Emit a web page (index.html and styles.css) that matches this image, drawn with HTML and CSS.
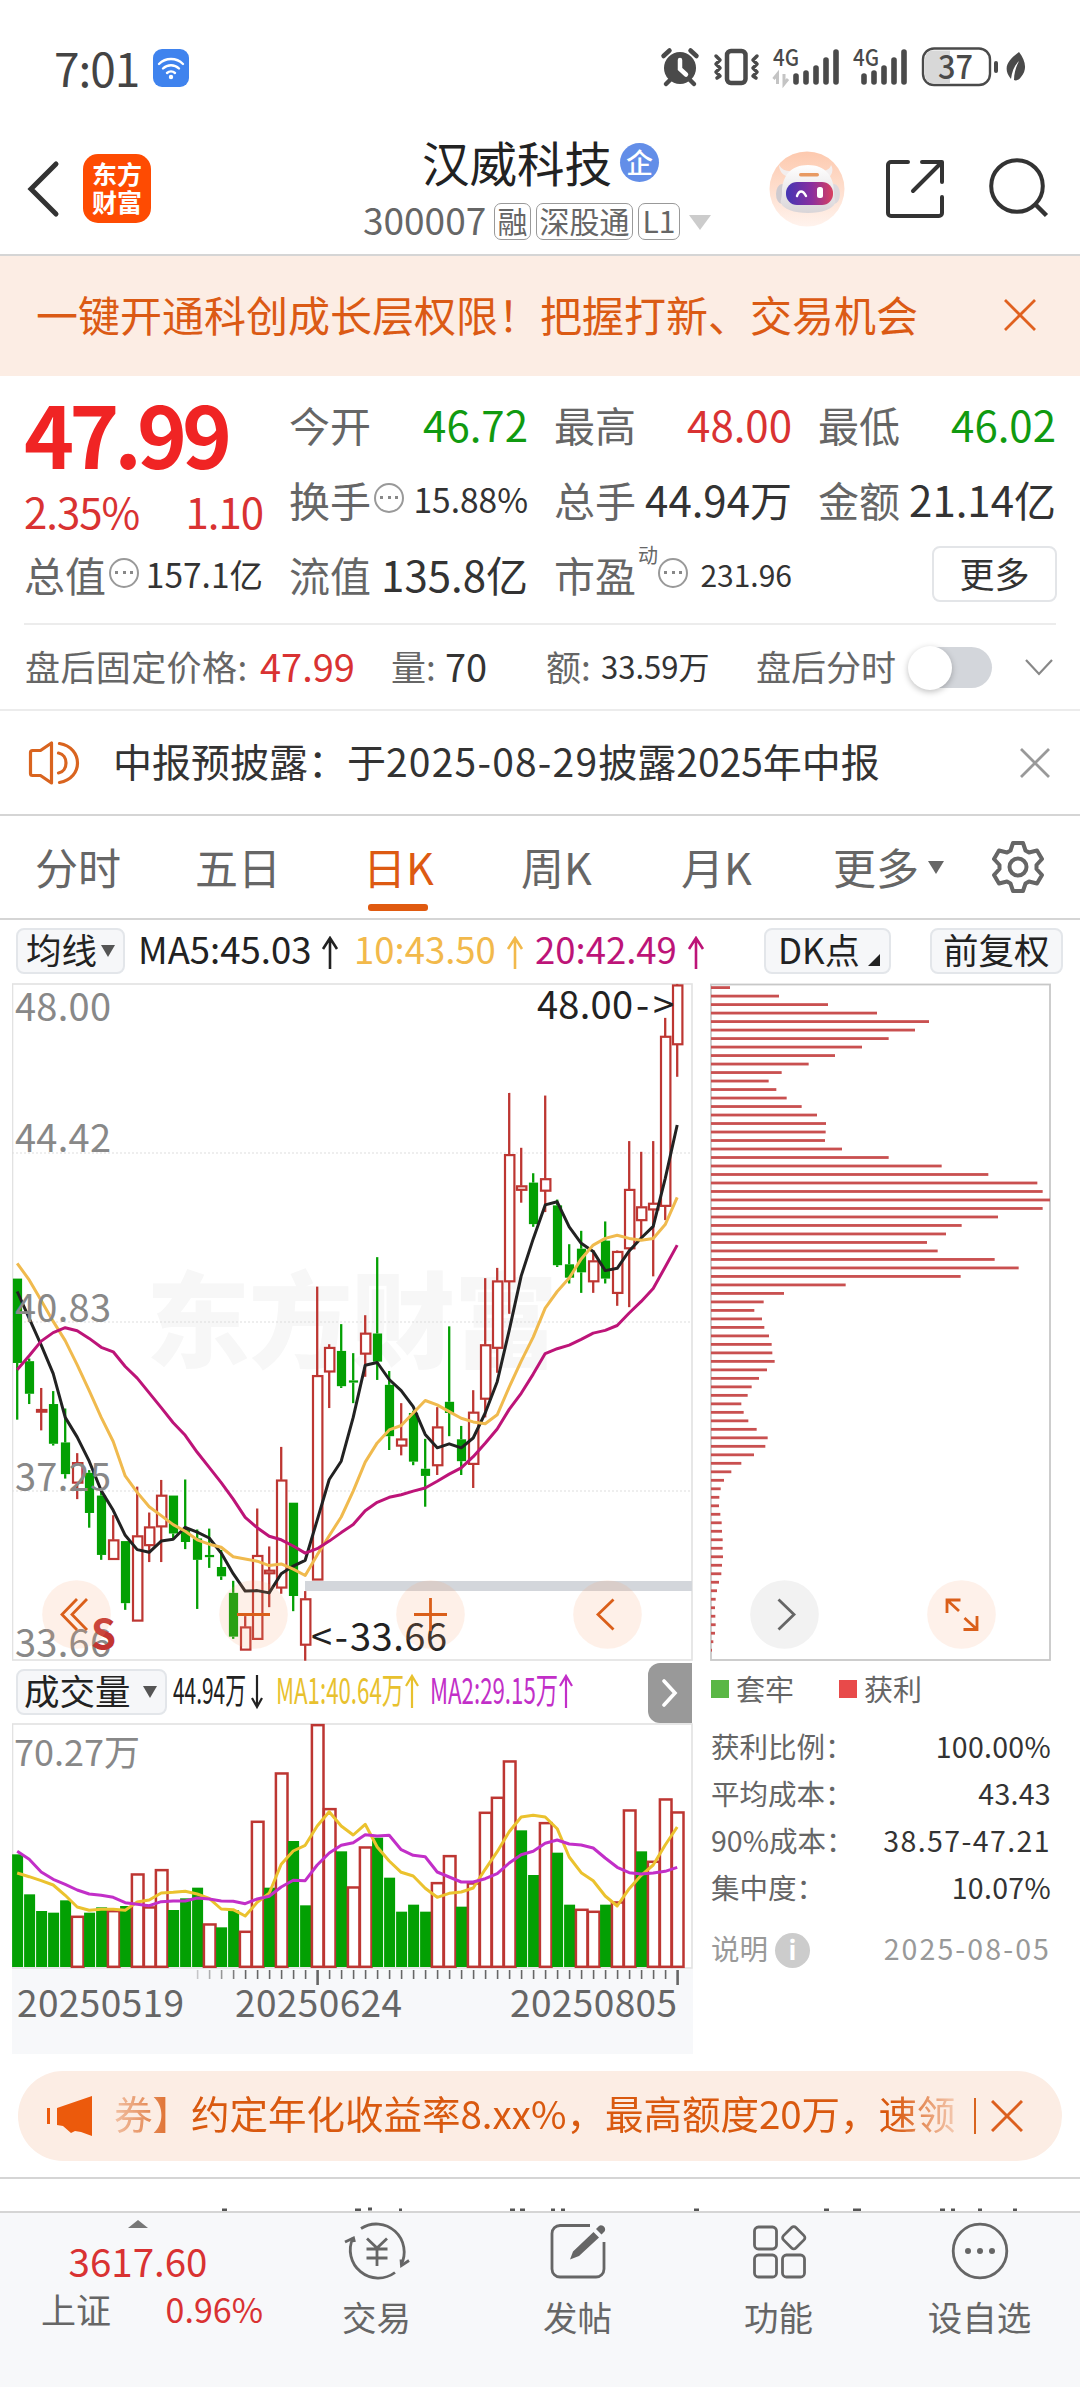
FILE: index.html
```html
<!DOCTYPE html>
<html lang="zh-CN">
<head>
<meta charset="utf-8">
<title>汉威科技 300007</title>
<link rel="stylesheet" href="styles.css">
</head>
<body>
<div class="app">
  <div class="status">
    <div class="status-left">
      <span class="clock">7:01</span>
      <svg class="wifi" viewBox="0 0 36 38"><rect width="36" height="38" rx="9" fill="#3f83ee"/><g fill="none" stroke="#fff" stroke-width="2.4" stroke-linecap="round"><path d="M6 15a17 17 0 0 1 24 0"/><path d="M10 19.500a11.500 11.500 0 0 1 16 0"/><path d="M14 24a6 6 0 0 1 8 0"/></g><circle cx="18" cy="28" r="2.200" fill="#fff"/></svg>
    </div>
    <svg class="status-icons" viewBox="658 44 370 46">
      <g fill="#4a4a4a" stroke="none">
        <circle cx="680" cy="68" r="16"/>
        <g fill="none" stroke="#4a4a4a" stroke-width="4.500" stroke-linecap="round"><path d="M663.500 56l6-5.500M696.500 56l-6-5.500M670 80l-4 4M690 80l4 4"/></g>
        <path d="M680 60v9l6 5.500" fill="none" stroke="#fff" stroke-width="4.500" stroke-linecap="round"/>
        <rect x="727" y="51" width="18.500" height="32" rx="4" fill="none" stroke="#4a4a4a" stroke-width="4.500"/>
        <path d="M716 56l4 4-4 4 4 4-4 4 4 4-3 2M757 56l-4 4 4 4-4 4 4 4-4 4 3 2" fill="none" stroke="#4a4a4a" stroke-width="3.500" stroke-linecap="round" stroke-linejoin="round"/>
        <path d="M796 76v6M806 73v9M816 68v14M826 60v22M836 52v30M864 76v6M874 73v9M884 68v14M894 60v22M904 52v30" fill="none" stroke="#4a4a4a" stroke-width="5.600" stroke-linecap="round"/>
        <path d="M777.500 84v-10l-4 5M784 74v10l4-5" fill="none" stroke="#c4c4c4" stroke-width="3"/>
      </g>
      <rect x="923" y="48.500" width="67" height="36.500" rx="11" fill="#fff" stroke="#4a4a4a" stroke-width="2.400"/>
      <path d="M950 50.500h-17a8 8 0 0 0-8 8v17a8 8 0 0 0 8 8h17z" fill="#d8d8d8"/>
      <rect x="994" y="61" width="4" height="12" rx="2" fill="#4a4a4a"/>
      <path d="M1019 52c6 8 9 17 2 25-2 3-5 4-7 3 0-7 2-13 5-19-5 5-7 11-8 18-9-11-3-19 8-27z" fill="#4a4a4a"/>
      <text class="net" x="773" y="66" textLength="26" lengthAdjust="spacingAndGlyphs">4G</text>
      <text class="net" x="853" y="66" textLength="26" lengthAdjust="spacingAndGlyphs">4G</text>
      <text class="batt" x="938" y="78.500" textLength="35" lengthAdjust="spacingAndGlyphs">37</text>
    </svg>
  </div>

  <header class="header">
    <svg class="back" viewBox="0 0 34 58"><path d="M30 4L5 29l25 25" fill="none" stroke="#333" stroke-width="5" stroke-linecap="round"/></svg>
    <div class="logo"><span>东方</span><span>财富</span></div>
    <div class="title">
      <div class="name">汉威科技<span class="ent">企</span></div>
      <div class="code"><span class="num">300007</span><span class="tag">融</span><span class="tag wide">深股通</span><span class="tag l1">L1</span><i class="tri"></i></div>
    </div>
    <svg class="robot" viewBox="0 0 76 76">
      <defs>
        <linearGradient id="rb" x2="0" y2="1"><stop stop-color="#fdc9ae"/><stop offset="1" stop-color="#fff3ed"/></linearGradient>
        <linearGradient id="rv"><stop stop-color="#4436b4"/><stop offset=".55" stop-color="#8a2f9e"/><stop offset="1" stop-color="#d8405f"/></linearGradient>
        <linearGradient id="rh" x2="0" y2="1"><stop stop-color="#fff"/><stop offset="1" stop-color="#d9d5d8"/></linearGradient>
      </defs>
      <circle cx="38" cy="38" r="37.500" fill="url(#rb)"/>
      <path d="M10 14c0 5 3 10 9 12l5-6c-6 1-11-1-14-6zM62 14c3 5 1 10-3 13l-7-7c5 0 9-2 10-6z" fill="#f3eeee"/>
      <ellipse cx="13" cy="43" rx="6" ry="10" fill="#cfcbd0"/><ellipse cx="65" cy="43" rx="6" ry="10" fill="#dcd8dc"/>
      <path d="M39 14c17 0 26 11 26 27 0 6 2 9 1 11-2 6-13 10-27 10S14 58 12 52c-1-2 1-5 1-11 0-16 9-27 26-27z" fill="url(#rh)"/>
      <rect x="30" y="22" width="20" height="3.500" rx="1.700" fill="#e89a63"/>
      <rect x="17" y="31" width="47" height="23" rx="11" fill="url(#rv)"/>
      <path d="M28 45c2-6 6-6 9 0" fill="none" stroke="#fff" stroke-width="2.400" stroke-linecap="round"/><rect x="48" y="36" width="6" height="11" rx="2.500" fill="#fff"/>
    </svg>
    <svg class="share" viewBox="0 0 60 60"><path d="M23 3H6a3 3 0 0 0-3 3v48a3 3 0 0 0 3 3h48a3 3 0 0 0 3-3V38M37 3h20v20M56 4L28 32" fill="none" stroke="#333" stroke-width="4" stroke-linecap="round" stroke-linejoin="round"/></svg>
    <svg class="search" viewBox="0 0 60 60"><circle cx="28" cy="28" r="25.800" fill="none" stroke="#333" stroke-width="4"/><path d="M47 47l10.500 10.500" stroke="#333" stroke-width="4.500"/></svg>
  </header>

  <div class="banner"><span>一键开通科创成长层权限！把握打新、交易机会</span><svg viewBox="0 0 32 32"><path d="M1 1l30 30M31 1L1 31" stroke="#e0611f" stroke-width="2.800"/></svg></div>

  <section class="quote">
    <div class="price-col">
      <div class="price">47.99</div>
      <div class="chg"><span>2.35%</span><span>1.10</span></div>
    </div>
    <div class="cell"><label>今开</label><b class="down">46.72</b></div>
    <div class="cell"><label>最高</label><b class="up">48.00</b></div>
    <div class="cell"><label>最低</label><b class="down">46.02</b></div>
    <div class="cell"><label>换手</label><i class="dots"></i><b class="s">15.88%</b></div>
    <div class="cell"><label>总手</label><b>44.94万</b></div>
    <div class="cell"><label>金额</label><b>21.14亿</b></div>
    <div class="cell"><label>总值</label><i class="dots"></i><b class="s">157.1亿</b></div>
    <div class="cell"><label>流值</label><b>135.8亿</b></div>
    <div class="cell"><label>市盈</label><sup>动</sup><i class="dots pe"></i><b class="xs">231.96</b></div>
    <div class="cell more"><span>更多</span></div>
  </section>

  <div class="after">
    <span class="k k1">盘后固定价格:</span><span class="v up">47.99</span>
    <span class="k">量:</span><span class="v">70</span>
    <span class="k">额:</span><span class="v small">33.59万</span>
    <span class="k">盘后分时</span><span class="toggle"><i></i></span>
    <svg viewBox="0 0 30 18"><path d="M2 2l13 14L28 2" fill="none" stroke="#888" stroke-width="2.200"/></svg>
  </div>

  <div class="notice">
    <svg class="spk" viewBox="0 0 52 46"><g fill="none" stroke="#d9641f" stroke-width="3.200" stroke-linejoin="round"><path d="M2 12.500q0-2 2-2h8L23 3v40L12 35.500H4q-2 0-2-2z"/><path d="M30 13c10 2 10 18 0 20M31 3.500c24 4 24 35 0 39" stroke-linecap="round"/></g></svg>
    <span>中报预披露：于<em>2025-08-29</em>披露2025年中报</span>
    <svg class="x" viewBox="0 0 30 30"><path d="M1 1l28 28M29 1L1 29" stroke="#999" stroke-width="2.800"/></svg>
  </div>

  <nav class="tabs">
    <span>分时</span><span>五日</span><span class="on">日K</span><span>周K</span><span>月K</span><span>更多<i></i></span>
    <svg viewBox="-28 -28 56 56"><g fill="none" stroke="#666" stroke-width="4" stroke-linejoin="round"><path d="M-5-24H5L7.500-16.500 11-14.500 19-16.500 24-8 18.500-2V2L24 8 19 16.500 11 14.500 7.500 16.500 5 24H-5L-7.500 16.500-11 14.500-19 16.500-24 8-18.500 2V-2L-24-8-19-16.500-11-14.500-7.500-16.500Z"/><circle r="8.500"/></g></svg>
  </nav>

  <div class="ma-bar">
    <span class="btn">均线<i class="dn"></i></span>
    <span class="ma m5">MA5:45.03<svg viewBox="0 0 20 34"><path d="M10 33V3M3 13l7-11 7 11"/></svg></span>
    <span class="ma m10">10:43.50<svg viewBox="0 0 20 34"><path d="M10 33V3M3 13l7-11 7 11"/></svg></span>
    <span class="ma m20">20:42.49<svg viewBox="0 0 20 34"><path d="M10 33V3M3 13l7-11 7 11"/></svg></span>
    <span class="btn dk">DK点<i class="corner"></i></span><span class="btn fq">前复权</span>
  </div>

  <main class="charts">
    <div class="left">
      <svg id="kline" viewBox="12 982 681 679"></svg>
      <div class="vol-bar">
        <span class="btn">成交量<i class="dn"></i></span>
        <svg viewBox="173 1661 475 61">
          <text x="173" y="1702.500" textLength="73" lengthAdjust="spacingAndGlyphs" fill="#222">44.94万</text>
          <text x="276" y="1702.500" textLength="128" lengthAdjust="spacingAndGlyphs" fill="#e8c12e">MA1:40.64万</text>
          <text x="430" y="1702.500" textLength="128" lengthAdjust="spacingAndGlyphs" fill="#c22fc8">MA2:29.15万</text>
          <g fill="none" stroke-width="2.200"><path stroke="#222" d="M257 1674v31M252 1697l5 9 5-9"/><path stroke="#e8c12e" d="M412 1707v-31M406 1685l6-10 6 10"/><path stroke="#c22fc8" d="M566 1707v-31M560 1685l6-10 6 10"/></g>
        </svg>
        <span class="expand"><svg viewBox="0 0 18 28"><path d="M3 2l11 12L3 26" fill="none" stroke="#fff" stroke-width="3.600" stroke-linecap="round"/></svg></span>
      </div>
      <svg id="volume" viewBox="12 1722 681 246"></svg>
      <div class="dates">
        <svg id="ticks" viewBox="12 1968 680 18"></svg>
        <div class="labels"><span>20250519</span><span>20250624</span><span>20250805</span></div>
      </div>
    </div>
    <div class="right">
      <svg id="chips" viewBox="709 982 343 679"></svg>
      <div class="legend"><i class="g"></i><span>套牢</span><i class="r"></i><span>获利</span></div>
      <div class="stat"><label>获利比例：</label><b>100.00%</b></div>
      <div class="stat"><label>平均成本：</label><b>43.43</b></div>
      <div class="stat"><label>90%成本：</label><b class="range">38.57-47.21</b></div>
      <div class="stat"><label>集中度：</label><b>10.07%</b></div>
      <div class="stat note"><label>说明</label><i>i</i><b>2025-08-05</b></div>
    </div>
  </main>

  <div class="promo">
    <svg class="horn" viewBox="0 0 46 40"><path d="M45 0v40l-11-4-6-1-4 2-8-7-6-1V12z" fill="#ec5a0c"/><path d="M1.500 12v16" stroke="#ec5a0c" stroke-width="3"/></svg>
    <div class="marquee">券】约定年化收益率8.xx%，最高额度20万，速领</div>
    <i class="bar"></i>
    <svg class="px" viewBox="0 0 32 32"><path d="M1 1l30 30M31 1L1 31" stroke="#dc5f1e" stroke-width="3"/></svg>
  </div>
  <div class="next"><svg viewBox="0 2180 1080 32"><path d="M222 2211h5M355 2211h6M368 2210h4M399 2211h3M510 2211h5M520 2211h5M551 2211h4M561 2211h4M694 2211h5M824 2211h5M853 2211h8M940 2211h5M951 2211h4M978 2211h4M1013 2211h4" stroke="#555" stroke-width="3"/></svg></div>

  <footer class="bottom">
    <div class="index"><i></i><b>3617.60</b><div><span>上证</span><em>0.96%</em></div></div>
    <div class="act"><svg viewBox="-34 -30 68 60"><g fill="none" stroke="#666" stroke-width="2.800"><path d="M-16-22.500A28 28 0 0 1 24 14M18 21.500A28 28 0 0 1-24-13"/><path d="M-32-9l8.500-4 1 4M32 9.500l-7.500 5-.5-6"/><path d="M-10-12.500L0-3l10-9.500M0-3v18M-10.500-2h21M-10.500 7h21"/></g></svg><span>交易</span></div>
    <div class="act"><svg viewBox="-34 -30 68 60"><path d="M12-25.500h-30a8 8 0 0 0-8 8v35.500a8 8 0 0 0 8 8h36a8 8 0 0 0 8-8v-27" fill="none" stroke="#666" stroke-width="2.800"/><path d="M-8 8.500l3-8L15.500-19l5.500 5.500L1 5zM18-22l3-3c3-2.500 8 2 5.500 5.500l-3 3z" fill="#666"/></svg><span>发帖</span></div>
    <div class="act"><svg viewBox="-34 -30 68 60"><g fill="none" stroke="#666" stroke-width="2.800"><rect x="-24.500" y="-24" width="22" height="22" rx="4"/><rect x="-24.500" y="4" width="22" height="22" rx="4"/><rect x="3.500" y="4" width="22" height="22" rx="4"/><rect x="6" y="-22" width="17.500" height="17.500" rx="3" transform="rotate(45 14.750 -13.250)"/></g></svg><span>功能</span></div>
    <div class="act"><svg viewBox="-34 -30 68 60"><circle r="26.800" fill="none" stroke="#666" stroke-width="2.800"/><g fill="#666"><circle cx="-12" r="3"/><circle r="3"/><circle cx="12" r="3"/></g></svg><span>设自选</span></div>
  </footer>
</div>
<script src="charts.js"></script>
</body>
</html>
```
FILE: styles.css
```css
* { box-sizing: border-box; }
body { margin: 0; background: #fff; font-family: "Noto Sans CJK SC", "Noto Sans", sans-serif; color: #333; }
i, em { font-style: normal; }
b { font-weight: 400; }
svg { display: block; flex: none; }
span, label, b, sup, em { white-space: nowrap; }
.app { width: 1080px; height: 2388px; overflow: hidden; display: flex; flex-direction: column; }
.up { color: #d93232; }
.down { color: #109a10; }

.status { height: 134px; flex: none; display: flex; justify-content: space-between; padding: 0 52px 0 54px; }
.status-left { display: flex; padding-top: 46px; }
.clock { width: 99px; font-size: 46px; line-height: 42px; letter-spacing: -1px; color: #444; }
.wifi { width: 36px; height: 38px; margin-top: 3px; }
.status-icons { width: 370px; height: 46px; margin-top: 44px; overflow: visible; }
.net { font-size: 23px; font-weight: 500; fill: #4a4a4a; }
.batt { font-size: 33px; font-weight: 500; fill: #4a4a4a; }

.header { height: 122px; flex: none; display: flex; border-bottom: 2px solid #d5d5d5; }
.back { width: 34px; height: 58px; margin: 26px 0 0 26px; }
.logo { width: 68px; height: 69px; margin: 20px 0 0 23px; border-radius: 15px; background: #fe4b02; color: #fff; font-size: 25px; font-weight: 700; line-height: 28px; display: flex; flex-direction: column; align-items: center; padding-top: 5px; }
.title { width: 360px; margin-left: 212px; }
.name { height: 58px; display: flex; align-items: center; padding-left: 59px; font-size: 47.500px; line-height: 54px; margin-top: -1px; color: #222; }
.ent { width: 39px; height: 39px; margin-left: 8px; border-radius: 50%; background: #638ee8; color: #fff; font-size: 27px; line-height: 37px; font-weight: 500; text-align: center; }
.code { display: flex; align-items: center; height: 58px; margin-top: 1px; color: #666; font-size: 37px; }
.num { width: 131px; line-height: 36px; margin-top: -4px; }
.tag { width: 37px; height: 37px; margin-right: 5px; border: 1.500px solid #999; border-radius: 7px; font-size: 30px; line-height: 33px; text-align: center; }
.wide { width: 97px; }
.l1 { width: 42px; }
.tri { margin: 2px 0 0 4px; border: 11px solid transparent; border-top: 15px solid #ccc; border-bottom: 0; }
.robot { width: 76px; height: 76px; margin: 17px 0 0 46px; }
.share { width: 60px; height: 60px; margin: 25px 0 0 40px; }
.search { width: 60px; height: 60px; margin: 24px 0 0 44px; }

.banner { height: 120px; flex: none; background: #fcede4; color: #db5a14; display: flex; align-items: center; justify-content: space-between; padding: 0 44px 0 36px; font-size: 42px; }
.banner span { line-height: 50px; margin-top: -5px; }
.banner svg { width: 32px; height: 32px; margin-top: -2px; }

.quote { height: 249px; flex: none; margin: 0 24px; border-bottom: 2px solid #ececec; display: grid; grid-template-columns: 239px 239px 238px 238px; column-gap: 26px; grid-template-rows: 75px 75px 75px; padding-top: 12px; }
.price-col { grid-row: 1 / 3; }
.price { height: 101px; font-size: 85px; line-height: 88px; letter-spacing: -5px; font-weight: 700; color: #f02424; }
.chg { display: flex; justify-content: space-between; font-size: 42px; line-height: 44px; letter-spacing: -1px; color: #d93232; }
.cell { display: flex; align-items: center; line-height: 60px; padding-bottom: 3px; }
.cell label { font-size: 41px; color: #666; }
.cell b { margin-left: auto; font-size: 42px; }
.cell .s { font-size: 33.500px; }
.cell .xs { font-size: 30px; }
.dots { width: 30px; height: 30px; margin: -3px 0 0 3px; border: 2.500px solid #999; border-radius: 50%; background: radial-gradient(circle 2px, #888 90%, transparent) center / 7px 7px no-repeat, radial-gradient(circle 2px, #888 90%, transparent) 2px center / 7px 7px no-repeat, radial-gradient(circle 2px, #888 90%, transparent) right 2px center / 7px 7px no-repeat; }
.cell sup { font-size: 20px; line-height: 24px; color: #666; margin: -39px 0 0 2px; }
.pe { margin-left: 0; }
.more span { width: 125px; height: 56px; margin-left: auto; border: 2px solid #e3e5e8; border-radius: 8px; font-size: 35px; line-height: 49px; text-align: center; }
.more { padding-bottom: 3px; margin-right: -1px; }

.after { height: 86px; flex: none; display: grid; align-items: center; grid-template-columns: 235px 131px 54px 101px 55px 155px 153px 115px 30px; padding-left: 25px; border-bottom: 2px solid #ececec; font-size: 35px; color: #666; }
.after span { line-height: 50px; margin-top: -2px; }
.k1 { letter-spacing: .4px; }
.v { font-size: 38px; color: #333; }
.after .up { color: #d93232; }
.after .small { font-size: 31px; }
.after .toggle { width: 78px; height: 41px; margin: 1px 0 0 5px; border-radius: 21px; background: #d3d6db; }
.toggle i { display: block; width: 44px; height: 44px; margin: -1px 0 0 -6px; border-radius: 50%; background: #fff; box-shadow: 0 2px 6px rgba(0,0,0,.25); }
.after svg { width: 30px; height: 18px; }

.notice { height: 105px; flex: none; display: flex; align-items: center; border-bottom: 2px solid #d5d5d5; padding-left: 28px; color: #333; }
.spk { width: 53px; height: 46px; }
.notice span { width: 907px; margin: -6px 0 0 32px; font-size: 39px; }
.notice em { letter-spacing: 1.200px; }
.notice .x { width: 30px; height: 30px; }

.tabs { height: 104px; flex: none; display: grid; grid-template-columns: 160px 168px 158px 160px 152px 156px 60px; padding-left: 35px; align-items: center; border-bottom: 2px solid #d5d5d5; font-size: 43px; color: #666; }
.tabs span { height: 96px; display: flex; align-items: center; position: relative; padding-bottom: 3px; }
.tabs .on { color: #dd5a12; }
.on::after { content: ""; position: absolute; left: 5px; bottom: 4px; width: 60px; height: 7px; border-radius: 3px; background: #e05a10; }
.tabs i { margin: 4px 0 0 9px; border: 8px solid transparent; border-top: 13px solid #666; border-bottom: 0; }
.tabs svg { width: 56px; height: 56px; margin-left: 1px; }

.ma-bar { height: 62px; flex: none; display: flex; align-items: center; padding-left: 16px; font-size: 36.500px; color: #222; }
.btn { height: 46px; flex: none; display: flex; align-items: center; border: 2px solid #e3e6ea; border-radius: 8px; background: #f6f7f9; color: #222; font-size: 35.500px; line-height: 36px; }
.ma-bar .btn { width: 109px; padding: 0 0 4px 8px; }
.dn { margin: 4px 0 0 4px; border: 7px solid transparent; border-top: 12px solid #555; border-bottom: 0; }
.ma { line-height: 50px; margin-top: -4px; display: flex; align-items: center; }
.ma svg { width: 20px; height: 34px; margin: 7px 0 0 9px; fill: none; stroke: currentColor; stroke-width: 2.600px; }
.m5 { width: 216px; margin-left: 13px; }
.m10 { width: 181px; color: #f2b94b; }
.m20 { width: 229px; color: #bd1478; }
.ma-bar .dk { width: 127px; padding-left: 12px; font-size: 35px; }
.corner { margin: 22px 0 0 8px; border-left: 12px solid transparent; border-bottom: 12px solid #222; }
.ma-bar .fq { width: 133px; margin-left: 39px; padding-left: 11px; }

.charts { height: 1071px; flex: none; margin-top: 1px; display: flex; }
.left { width: 681px; margin-left: 12px; }
#kline { width: 681px; height: 679px; }
.vol-bar { height: 61px; display: flex; align-items: center; padding-left: 4px; }
.vol-bar .btn { width: 151px; margin-right: 6px; padding: 0 0 3px 6px; }
.vol-bar .btn { margin-top: -2px; }
.vol-bar .dn { margin-left: 12px; }
.vol-bar > svg { width: 475px; height: 61px; font-size: 36px; }
.expand { width: 44px; height: 60px; border-radius: 12px 0 0 12px; background: #999; display: flex; align-items: center; justify-content: center; }
.expand svg { width: 18px; height: 28px; }
#volume { width: 681px; height: 246px; }
.dates { width: 681px; height: 85px; background: #f7f8fa; color: #666; font-size: 37px; }
#ticks { width: 680px; height: 18px; }
.labels { display: grid; grid-template-columns: 218px 275px 170px; padding-left: 5px; line-height: 32px; margin-top: -2px; letter-spacing: .4px; }
.right { width: 343px; margin-left: 16px; }
#chips { width: 343px; height: 679px; }
.legend { height: 56px; display: flex; align-items: center; font-size: 29px; line-height: 40px; color: #666; padding: 0 0 2px 2px; }
.legend i { width: 18px; height: 18px; background: #5ab745; }
.legend span { width: 103px; margin: -3px 0 0 7px; }
.legend .r { background: #e84a4a; }
.stat { height: 47px; display: flex; align-items: center; justify-content: space-between; padding: 9px 1px 0 2px; font-size: 28.500px; line-height: 38px; color: #666; }
.stat b { font-size: 28.500px; letter-spacing: .3px; color: #333; }
.stat .range { letter-spacing: 1.400px; }
.note { margin-top: 14px; color: #999; justify-content: flex-start; }
.note i { width: 35px; height: 35px; margin: 5px 0 0 7px; border-radius: 50%; background: #ccc; color: #fff; font-size: 26px; line-height: 31px; font-weight: 700; text-align: center; }
.note b { margin-left: auto; color: #999; letter-spacing: 2.100px; }

.promo { width: 1044px; height: 90px; flex: none; margin: 17px 0 0 18px; border-radius: 45px; background: #fcede4; display: flex; align-items: center; padding-left: 29px; }
.horn { width: 46px; height: 40px; }
.marquee { width: 844px; margin: -8px 0 0 21px; height: 60px; line-height: 60px; overflow: hidden; white-space: nowrap; font-size: 38.500px; color: #d9590f; -webkit-mask-image: linear-gradient(90deg, rgba(0,0,0,.3), #000 70px, #000 780px, transparent 860px); mask-image: linear-gradient(90deg, rgba(0,0,0,.3), #000 70px, #000 780px, transparent 860px); }
.bar { width: 2px; height: 36px; margin-left: 16px; background: #d9641f; }
.px { width: 32px; height: 32px; margin-left: 15px; }
.next { height: 34px; flex: none; margin-top: 16px; border-top: 2px solid #d5d5d5; }
.next svg { width: 1080px; height: 32px; }

.bottom { height: 176px; flex: none; background: #f7f8fa; border-top: 2px solid #d5d5d5; display: flex; }
.index { width: 276px; color: #666; font-size: 35px; display: flex; flex-direction: column; align-items: center; }
.index i { margin-top: 7px; border: 10px solid transparent; border-bottom: 8px solid #777; border-top: 0; }
.index b { font-size: 38.500px; line-height: 64px; color: #d93232; }
.index div { width: 222px; margin: 0 0 0 28px; display: flex; justify-content: space-between; line-height: 34px; }
.index em { font-size: 34px; color: #d93232; }
.act { width: 201px; display: flex; flex-direction: column; align-items: center; font-size: 34.500px; color: #666; line-height: 50px; }
.act svg { width: 68px; height: 60px; margin: 8px 0 10px; }
```
FILE: charts.js
```js
const NS = 'http://www.w3.org/2000/svg';
function add(svg, tag, attrs, text) {
  const el = document.createElementNS(NS, tag);
  for (const k in attrs) el.setAttribute(k, attrs[k]);
  if (text) el.textContent = text;
  svg.appendChild(el);
  return el;
}
const RED = '#bd3632', GREEN = '#03a003';
const X = i => 17.2 + i * 12;

// Each candle: direction, high, body top, body bottom, low
const candles = `G 689 689 878 1005;G 868 874 947 970;R 934 982 988 1029;G 941 970 1059 1063;G 980 1056 1127 1137;R 1080 1101 1147 1183;G 1118 1124 1214 1247;G 1160 1175 1308 1319;R 1219 1274 1318 1318;G 1277 1277 1416 1431;R 1155 1265 1456 1456;R 1213 1245 1287 1324;R 1140 1174 1245 1324;G 1175 1175 1260 1272;G 1139 1252 1279 1295;G 1251 1271 1319 1429;G 1249 1308 1313 1337;G 1297 1335 1356 1364;G 1366 1393 1491 1496;R 1445 1469 1521 1521;R 1204 1309 1497 1497;R 1289 1342 1350 1425;R 1066 1140 1382 1395;G 1191 1191 1400 1434;R 1389 1406 1510 1545;R 707 906 1364 1364;R 836 843 898 979;G 791 851 930 934;G 856 917 922 968;R 771 811 858 909;G 641 812 875 916;G 896 927 1042 1073;R 968 1048 1064 1085;G 985 990 1099 1107;G 1048 1115 1131 1200;R 977 1021 1108 1129;G 796 965 990 1042;G 1019 1049 1098 1129;R 939 988 1105 1158;R 688 837 959 1000;R 665 694 845 900;R 273 411 696 768;R 396 481 491 519;G 453 474 567 573;R 279 465 493 540;G 512 525 659 663;G 612 657 687 700;G 582 622 675 721;R 625 649 696 721;G 561 604 689 700;R 626 628 722 750;R 381 489 622 753;R 405 528 559 597;R 381 520 535 684;R 105 146 527 558;R 29 31 165 237`
  .split(';').map(s => s.split(' '));
const PY = v => 970 + v / 2.24;

const ma5 = [718,778,838,902,1000,1044,1098,1164,1208,1264,1296,1302,1277,1273,1246,1257,1270,1304,1350,1389,1388,1393,1350,1333,1320,1230,1139,1098,1000,883,877,915,940,976,1038,1068,1059,1068,1046,990,920,805,683,600,524,517,573,610,628,671,666,627,598,572,465,345];
const ma10 = [655,692,738,785,828,882,940,1000,1054,1131,1168,1200,1220,1240,1255,1274,1284,1291,1312,1317,1322,1332,1328,1340,1354,1308,1265,1223,1165,1100,1057,1028,1018,990,962,972,987,1002,1010,1014,994,932,874,820,755,718,688,645,614,599,592,599,603,599,568,507];
const ma20 = [893,862,829,810,799,806,823,843,853,886,912,945,978,1012,1040,1078,1112,1146,1183,1224,1247,1266,1274,1288,1304,1294,1277,1258,1240,1209,1190,1179,1173,1165,1158,1143,1127,1113,1088,1058,1026,982,946,903,857,846,838,825,811,805,794,766,740,711,663,614];

function line(svg, data, fy, color, w) {
  add(svg, 'polyline', { points: data.map((v, i) => X(i) + ',' + fy(v).toFixed(1)).join(' '), fill: 'none', stroke: color, 'stroke-width': w, 'stroke-linejoin': 'round' });
}

const k = document.getElementById('kline');
add(k, 'rect', { x: 12.5, y: 983, width: 679.5, height: 676, fill: '#fff', stroke: '#e2e2e2', 'stroke-width': 1.6 });
add(k, 'text', { x: 146, y: 1359, 'font-size': 104, 'font-weight': 900, fill: '#f7f7f7', textLength: 412 }, '东方财富');
[1152, 1321, 1490].forEach(y => add(k, 'line', { x1: 12, x2: 692, y1: y, y2: y, stroke: '#ddd', 'stroke-width': 1, 'stroke-dasharray': '2 2' }));
candles.forEach(([d, h, t, b, l], i) => {
  const [yh, yt, yb, yl] = [h, t, b, l].map(v => PY(+v));
  const x = X(i), c = d === 'G' ? GREEN : RED;
  add(k, 'line', { x1: x, x2: x, y1: yh, y2: yt, stroke: c, 'stroke-width': 2.3 });
  add(k, 'line', { x1: x, x2: x, y1: yb, y2: yl, stroke: c, 'stroke-width': 2.3 });
  if (d === 'G') add(k, 'rect', { x: x - 4.3, y: yt, width: 9.2, height: yb - yt, fill: c });
  else add(k, 'rect', { x: x - 4.2, y: yt + .6, width: 9.4, height: Math.max(1.5, yb - yt - 1), fill: '#fff', stroke: c, 'stroke-width': 2.2 });
});
add(k, 'rect', { x: 305, y: 1580, width: 387, height: 10, fill: '#d3d6db' });
line(k, ma5, PY, '#222', 3);
line(k, ma10, PY, '#f0ba4e', 3);
line(k, ma20, PY, '#bd1478', 3);
[['48.00', 1020], ['44.42', 1151], ['40.83', 1320.5], ['37.25', 1489.5], ['33.66', 1656]].forEach(([t, y]) =>
  add(k, 'text', { x: 15, y, 'font-size': 38, fill: '#888', textLength: 96 }, t));
add(k, 'text', { x: 537, y: 1017.5, 'font-size': 38, fill: '#222', textLength: 96 }, '48.00');
add(k, 'text', { x: 311, y: 1650, 'font-size': 38, fill: '#222', textLength: 37 }, '<-');
add(k, 'text', { x: 636, y: 1017.5, 'font-size': 38, fill: '#222', textLength: 38 }, '->');
add(k, 'text', { x: 350, y: 1650, 'font-size': 38, fill: '#222', textLength: 97 }, '33.66');
add(k, 'text', { x: 91, y: 1648, 'font-size': 40, 'font-weight': 700, fill: '#c23531' }, 'S');

function knob(svg, x, fill, stroke, d) {
  add(svg, 'circle', { cx: x, cy: 1613.5, r: 34.3, fill });
  add(svg, 'path', { d, fill: 'none', stroke, 'stroke-width': 2.8 });
}
const PEACH = 'rgba(250,160,110,.16)', ORANGE = '#da5f1a';
knob(k, 76.5, PEACH, ORANGE, 'M77 1598l-15 15.500 15 15.500M87 1598l-15 15.500 15 15.500');
knob(k, 253.5, PEACH, ORANGE, 'M237 1613.500h33');
knob(k, 430.5, PEACH, ORANGE, 'M414 1613.500h33M430.500 1597v33');
knob(k, 607.5, PEACH, ORANGE, 'M613.500 1598.500l-15.500 15 15.500 15');

// Volume histogram
const vol = `G580 G700 G750 G755 G718 R765 G755 G739 R748 G735 R638 R737 R625 G747 G712 G680 R788 G799 G748 R810 R480 G680 R335 G540 G733 R190 R442 G571 R677 R557 G530 G650 G752 G731 G752 R664 R583 G737 R665 R453 R408 R299 G508 G642 R484 G575 G731 R744 R750 G731 R722 R446 G571 R600 R413 R452`.split(' ');
const va = [636,647,659,672,703,738,748,745,745,748,723,717,696,694,691,699,712,744,746,765,724,697,610,570,553,495,452,495,522,490,558,600,634,645,682,709,697,693,681,625,572,512,468,463,468,503,588,635,659,705,735,683,643,612,552,498];
const vb = [571,595,633,655,670,687,699,703,709,725,730,734,722,720,720,711,714,720,721,728,714,706,678,658,659,612,576,553,545,521,525,523,566,583,587,633,648,663,663,653,638,606,581,571,547,537,549,552,561,591,619,635,639,636,631,619];
const VY = v => 1660 + v / 3;
const v = document.getElementById('volume');
add(v, 'rect', { x: 12.5, y: 1723, width: 679.5, height: 244, fill: '#fff', stroke: '#e2e2e2', 'stroke-width': 1.6 });
add(v, 'text', { x: 14, y: 1765, 'font-size': 36, fill: '#888' }, '70.27万');
vol.forEach((s, i) => {
  const y = VY(+s.slice(1)), x = X(i) + .3;
  if (s[0] === 'G') add(v, 'rect', { x: x - 5.4, y, width: 11, height: 1966 - y, fill: GREEN });
  else add(v, 'rect', { x: x - 5.6, y: y + .8, width: 11.6, height: 1965 - y, fill: '#fff', stroke: RED, 'stroke-width': 2.5 });
});
line(v, va, VY, '#ebc22e', 3);
line(v, vb, VY, '#c22fc8', 3);

const t = document.getElementById('ticks');
for (let i = 15; i < 56; i++) {
  const long = i === 25 || i === 55;
  add(t, 'line', { x1: X(i) + .4, x2: X(i) + .4, y1: 1969, y2: long ? 1984 : 1978, stroke: '#666', 'stroke-width': long ? 2.6 : 1.6, opacity: Math.min(1, (i - 13) / 6) });
}

// Cost distribution
const ends = [90,237,384,531,687,645,566,486,405,326,245,206,229,260,305,351,378,377,375,426,566,725,865,1012,1028,1050,1028,894,785,738,681,713,884,956,782,437,252,191,163,186,193,207,215,217,224,201,177,155,143,124,131,145,170,203,196,162,124,94,72,62,58,57,61,65,66,68,68,69,66,64,57,51,47,45,46,47,45,40,36];
const c = document.getElementById('chips');
add(c, 'rect', { x: 711, y: 983.5, width: 339, height: 675.5, fill: '#fff', stroke: '#c8c8c8', 'stroke-width': 1.8 });
ends.forEach((e, i) => add(c, 'rect', { x: 711, y: 985.2 + i * 8.495, width: e / 3 - 11, height: 2.8, fill: '#c95050' }));
knob(c, 784.5, '#f2f2f2', '#666', 'M778.500 1598.500l15.500 15-15.500 15');
knob(c, 961.5, '#fef1ea', ORANGE, 'M959 1610l-12-11M947 1612v-13h13.500M964.500 1617l12 11M977 1615v13.500h-13.500');
```
